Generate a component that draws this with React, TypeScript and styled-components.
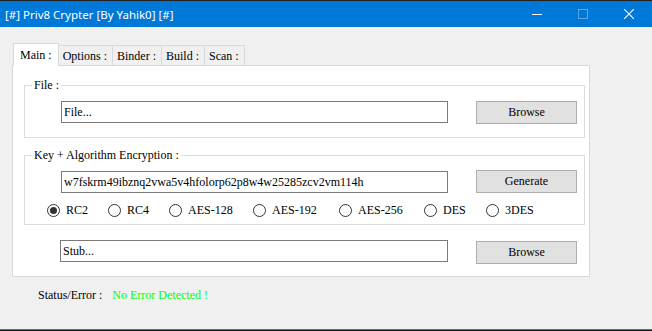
import React from "react";
import styled, { createGlobalStyle } from "styled-components";

const Global = createGlobalStyle`
  html, body {
    margin: 0;
    padding: 0;
    width: 652px;
    height: 331px;
    overflow: hidden;
    background: #f0f0f0;
  }
  #root { width: 652px; height: 331px; }
  * { box-sizing: border-box; }
`;

const Window = styled.div`
  width: 652px;
  height: 331px;
  display: flex;
  flex-direction: column;
  background: #f0f0f0;
  font-family: "Liberation Serif", "Times New Roman", serif;
  font-size: 12px;
  color: #000;
`;

const TitleBar = styled.div`
  height: 27px;
  border-top: 1px solid #1f1f1f;
  background: #0078d7;
  display: flex;
  align-items: center;
  color: #fff;
  font-family: "Noto Sans", "Open Sans", sans-serif;
  font-size: 11.5px;
  padding-left: 5px;
  flex-shrink: 0;
`;

const Title = styled.div`
  flex: 1;
  white-space: nowrap;
`;

const CaptionButton = styled.div<{ $dim?: boolean }>`
  width: 46px;
  height: 26px;
  display: flex;
  align-items: center;
  justify-content: center;
  opacity: ${(p) => (p.$dim ? 0.35 : 1)};
`;

const Body = styled.div`
  flex: 1;
  display: flex;
  flex-direction: column;
  padding: 16px 0 0 12px;
`;

const TabStrip = styled.div`
  display: flex;
  align-items: flex-end;
  height: 23px;
  position: relative;
  z-index: 1;
`;

const Tab = styled.div<{ $active?: boolean }>`
  height: ${(p) => (p.$active ? 23 : 21)}px;
  padding: ${(p) => (p.$active ? "0 6px" : "1px 5px 0 4px")};
  margin-left: ${(p) => (p.$active ? 1 : 0)}px;
  border: 1px solid #d9d9d9;
  border-bottom: ${(p) => (p.$active ? "none" : "1px solid #d9d9d9")};
  border-left: ${(p) => (p.$active ? "1px solid #d9d9d9" : "none")};
  background: ${(p) => (p.$active ? "#ffffff" : "#f0f0f0")};
  display: flex;
  align-items: center;
  white-space: nowrap;
`;

const Panel = styled.div`
  width: 578px;
  height: 212px;
  margin-top: -1px;
  border: 1px solid #d9d9d9;
  background: #fff;
  padding: 12px 4px 0 11px;
  display: flex;
  flex-direction: column;
`;

const Group = styled.fieldset<{ $gap?: number; $pt?: number; $pb?: number }>`
  margin: ${(p) => p.$gap ?? 0}px 0 0 0;
  padding: ${(p) => p.$pt ?? 9}px 7px ${(p) => p.$pb ?? 13}px 7px;
  border: 1px solid #dcdcdc;
  min-width: 0;
`;

const GroupTitle = styled.legend`
  padding: 0 2px;
  margin: 0;
  line-height: 14px;
  font-size: 12px;
`;

const FieldRow = styled.div<{ $indent: number; $top?: number }>`
  display: flex;
  align-items: flex-start;
  gap: 28px;
  margin-left: ${(p) => p.$indent}px;
  margin-top: ${(p) => p.$top ?? 0}px;
`;

const TextBox = styled.div<{ $drop?: number }>`
  width: 387px;
  height: 22px;
  margin-top: ${(p) => p.$drop ?? 0}px;
  border: 1px solid #7a7a7a;
  background: #fff;
  display: flex;
  align-items: center;
  padding-left: 2px;
  white-space: nowrap;
  overflow: hidden;
`;

const Button = styled.div<{ $drop?: number }>`
  width: 101px;
  height: 23px;
  margin-top: ${(p) => p.$drop ?? 0}px;
  border: 1px solid #adadad;
  background: #e1e1e1;
  display: flex;
  align-items: center;
  justify-content: center;
  padding-bottom: 1px;
`;

const RadioRow = styled.div`
  display: flex;
  align-items: center;
  height: 16px;
  margin: 9px 0 0 15px;
`;

const RadioItem = styled.div<{ $w?: number }>`
  width: ${(p) => (p.$w ? `${p.$w}px` : "auto")};
  display: flex;
  align-items: center;
  gap: 6px;
  white-space: nowrap;
`;

const RadioDot = styled.span<{ $on?: boolean }>`
  width: 13px;
  height: 13px;
  border-radius: 50%;
  border: 1px solid #333;
  background: #fff;
  display: flex;
  align-items: center;
  justify-content: center;
  &::after {
    content: "";
    width: 7px;
    height: 7px;
    border-radius: 50%;
    background: ${(p) => (p.$on ? "#333" : "transparent")};
  }
`;

const StatusRow = styled.div`
  display: flex;
  align-items: center;
  gap: 10px;
  margin: 11px 0 0 26px;
  height: 14px;
`;

const StatusText = styled.span`
  color: #00ff00;
`;

const BottomEdge = styled.div`
  height: 2px;
  border-top: 1px solid #2b7fd0;
  background: #10151f;
  flex-shrink: 0;
`;

const algos: { name: string; w?: number; on?: boolean }[] = [
  { name: "RC2", w: 61, on: true },
  { name: "RC4", w: 61 },
  { name: "AES-128", w: 84 },
  { name: "AES-192", w: 86 },
  { name: "AES-256", w: 85 },
  { name: "DES", w: 62 },
  { name: "3DES" },
];

export default function App() {
  return (
    <>
      <Global />
      <Window>
        <TitleBar>
          <Title>[#] Priv8 Crypter [By Yahik0] [#]</Title>
          <CaptionButton>
            <svg width="10" height="10" viewBox="0 0 10 10">
              <line x1="0" y1="5.5" x2="10" y2="5.5" stroke="#fff" strokeWidth="1" />
            </svg>
          </CaptionButton>
          <CaptionButton $dim>
            <svg width="10" height="10" viewBox="0 0 10 10">
              <rect x="0.5" y="0.5" width="9" height="9" fill="none" stroke="#fff" strokeWidth="1" />
            </svg>
          </CaptionButton>
          <CaptionButton>
            <svg width="10" height="10" viewBox="0 0 10 10">
              <path d="M0 0 L10 10 M10 0 L0 10" stroke="#fff" strokeWidth="1.1" />
            </svg>
          </CaptionButton>
        </TitleBar>
        <Body>
          <TabStrip>
            <Tab $active>Main :</Tab>
            <Tab>Options :</Tab>
            <Tab>Binder :</Tab>
            <Tab>Build :</Tab>
            <Tab>Scan :</Tab>
          </TabStrip>
          <Panel>
            <Group>
              <GroupTitle>File :</GroupTitle>
              <FieldRow $indent={29}>
                <TextBox>File...</TextBox>
                <Button>Browse</Button>
              </FieldRow>
            </Group>
            <Group $gap={10} $pt={8} $pb={6}>
              <GroupTitle>Key + Algorithm Encryption :</GroupTitle>
              <FieldRow $indent={29}>
                <TextBox $drop={1}>w7fskrm49ibznq2vwa5v4hfolorp62p8w4w25285zcv2vm114h</TextBox>
                <Button>Generate</Button>
              </FieldRow>
              <RadioRow>
                {algos.map((a) => (
                  <RadioItem key={a.name} $w={a.w}>
                    <RadioDot $on={a.on} />
                    {a.name}
                  </RadioItem>
                ))}
              </RadioRow>
            </Group>
            <FieldRow $indent={36} $top={15}>
              <TextBox style={{ width: 388 }}>Stub...</TextBox>
              <Button $drop={1}>Browse</Button>
            </FieldRow>
          </Panel>
          <StatusRow>
            <span>Status/Error :</span>
            <StatusText>No Error Detected !</StatusText>
          </StatusRow>
        </Body>
        <BottomEdge />
      </Window>
    </>
  );
}
